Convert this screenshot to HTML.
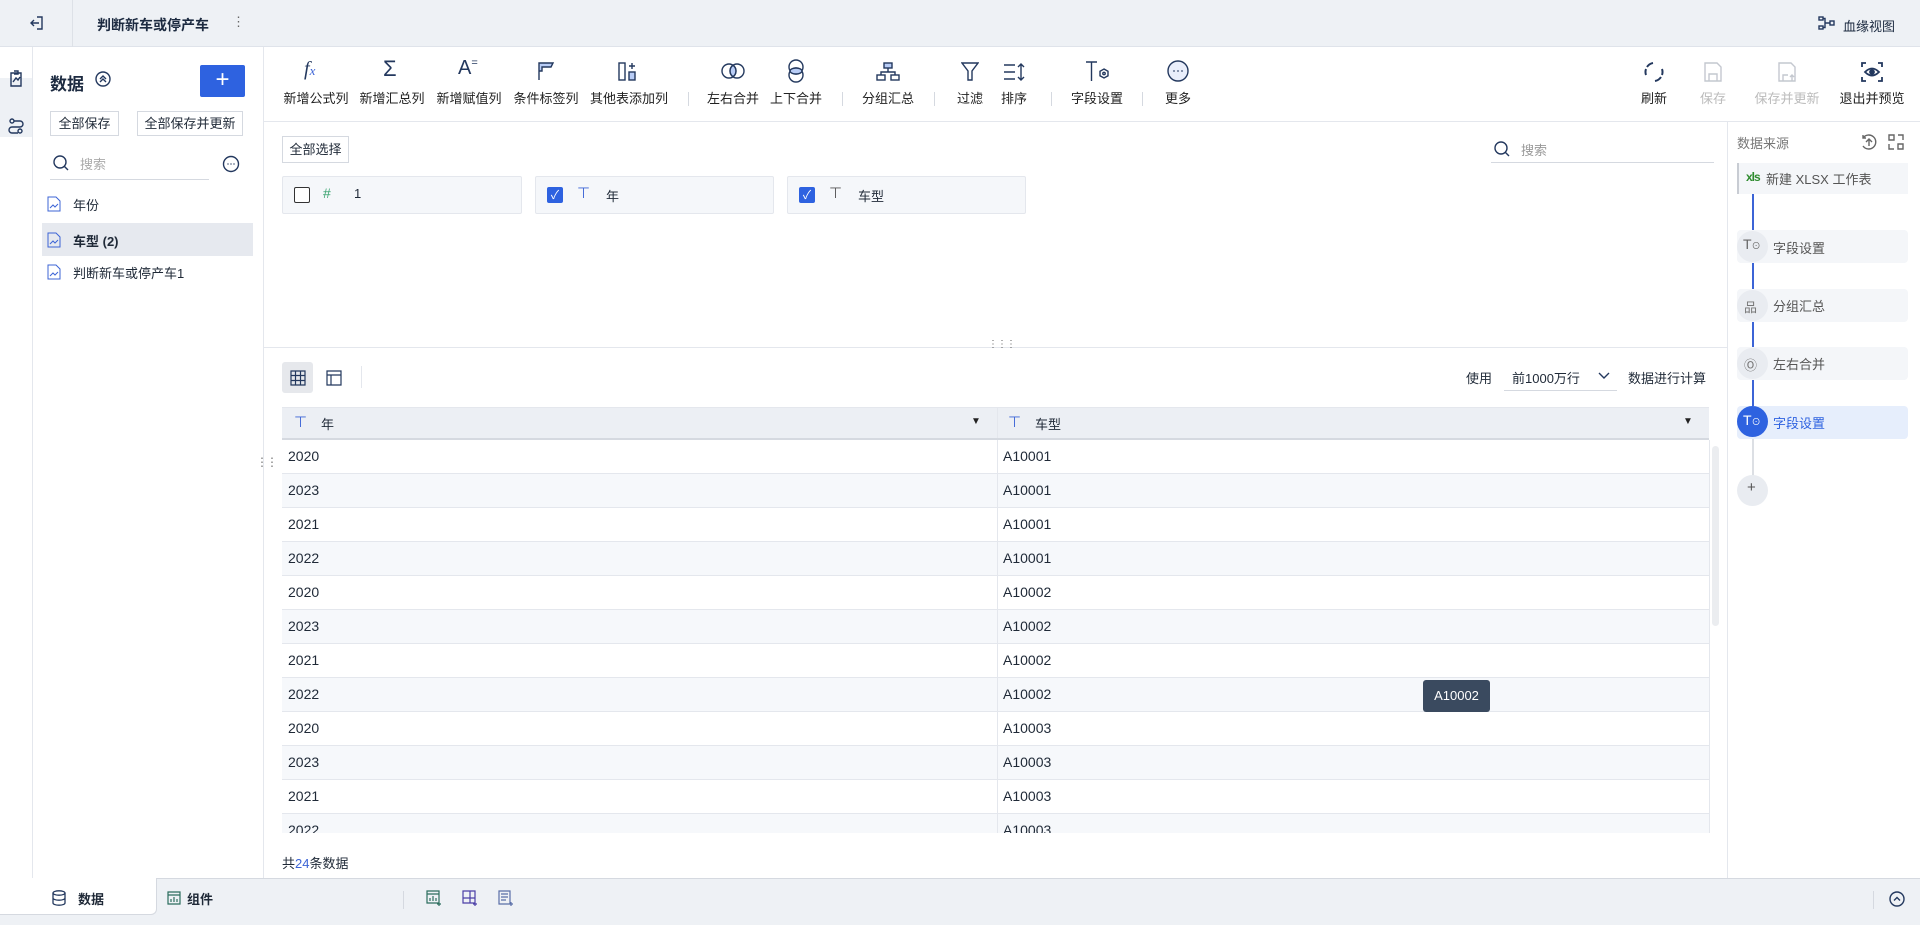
<!DOCTYPE html>
<html><head><meta charset="utf-8">
<style>
*{box-sizing:border-box;margin:0;padding:0}
body{width:1920px;height:925px;overflow:hidden;position:relative;background:#fff;font-family:"Liberation Sans","Noto Sans CJK SC",sans-serif;color:#1f2937;font-size:13px}
.a{position:absolute}
.ic{position:absolute;fill:none;stroke:#23385e;stroke-width:1.4}
.tb{position:absolute;top:88px;font-size:13px;color:#222;white-space:nowrap;transform:translateX(-50%)}
.sep{position:absolute;top:92px;width:1px;height:14px;background:#d5d9e0}
.row{position:absolute;left:282px;width:1427px;height:34px;border-bottom:1px solid #e4e7ed;font-size:14px}
.row span{position:absolute;top:8px}
.row .c1{left:6px}.row .c2{left:721px}
.row .d{position:absolute;left:715px;top:0;width:1px;height:34px;background:#e4e7ed}
.step{position:absolute;left:1737px;width:171px;height:33px;background:#f4f6f9;border-radius:4px}
.circ{position:absolute;left:1737px;width:31px;height:31px;border-radius:50%;background:#e9ecf1}
.st{position:absolute;left:1773px;font-size:13px;color:#555}
</style></head><body>
<div class="a" style="left:0;top:0;width:1920px;height:47px;background:#eef1f5;border-bottom:1px solid #dfe3ea"></div>
<div class="a" style="left:72px;top:0;width:1px;height:47px;background:#dde1e7"></div>
<svg class="ic" style="left:29px;top:15px" width="16" height="16" viewBox="0 0 16 16"><path d="M8 2h5v12H8M2 8h8M5 5L2 8l3 3"/></svg>
<div class="a" style="left:97px;top:15px;font-size:14px;font-weight:bold;color:#1c2a40">判断新车或停产车</div>
<div class="a" style="left:232px;top:14px;font-size:13px;color:#666">⋮</div>
<svg class="ic" style="left:1818px;top:16px" width="18" height="14" viewBox="0 0 18 14"><rect x="1" y="1" width="4" height="3"/><rect x="1" y="10" width="4" height="3"/><rect x="12" y="5" width="4" height="4"/><path d="M5 2.5h2v9H5M7 7h5"/></svg>
<div class="a" style="left:1843px;top:16px;font-size:13px;color:#1c2a40">血缘视图</div>

<div class="a" style="left:0;top:47px;width:33px;height:831px;background:#fff;border-right:1px solid #e4e7ed"></div>
<div class="a" style="left:0;top:78px;width:32px;height:59px;background:#eef1f5"></div>
<svg class="ic" style="left:8px;top:70px" width="16" height="18" viewBox="0 0 16 18"><path d="M3 3h10v13H3zM6 1h4v3H6M5 12l3-4 2 2 2-3"/></svg>
<svg class="ic" style="left:8px;top:117px" width="16" height="18" viewBox="0 0 16 18"><circle cx="4" cy="4" r="2"/><circle cx="12" cy="14" r="2"/><path d="M6 4h6a3 3 0 010 6H4a3 3 0 000 6h6"/></svg>

<div class="a" style="left:263px;top:47px;width:1px;height:831px;background:#e4e7ed"></div>
<div class="a" style="left:50px;top:70px;font-size:17px;font-weight:bold;color:#1c2a40">数据</div>
<svg class="ic" style="left:95px;top:71px" width="16" height="16" viewBox="0 0 16 16"><circle cx="8" cy="8" r="7"/><path d="M5 8l3-3 3 3M5 11l3-3 3 3"/></svg>
<div class="a" style="left:200px;top:65px;width:45px;height:32px;background:#2e62e0;border-radius:2px;color:#fff;font-size:24px;line-height:30px;text-align:center">+</div>
<div class="a" style="left:50px;top:111px;width:69px;height:25px;border:1px solid #d5d9e0;font-size:13px;line-height:23px;text-align:center">全部保存</div>
<div class="a" style="left:137px;top:111px;width:106px;height:25px;border:1px solid #d5d9e0;font-size:13px;line-height:23px;text-align:center">全部保存并更新</div>
<svg class="ic" style="left:52px;top:154px" width="18" height="18" viewBox="0 0 18 18"><circle cx="8" cy="8" r="6"/><path d="M12.5 12.5L16 16"/></svg>
<div class="a" style="left:80px;top:154px;font-size:13px;color:#aaa">搜索</div>
<div class="a" style="left:50px;top:179px;width:159px;height:1px;background:#d5d9e0"></div>
<svg class="ic" style="left:222px;top:155px" width="18" height="18" viewBox="0 0 18 18"><circle cx="9" cy="9" r="7.5"/><path d="M5.5 9h1M8.5 9h1M11.5 9h1"/></svg>
<div class="a" style="left:42px;top:223px;width:211px;height:33px;background:#e6e9ef"></div>
<svg class="ic" style="left:47px;top:196px;stroke:#3c64d6;stroke-width:1" width="14" height="16" viewBox="0 0 14 16"><path d="M1 1h8l4 4v10H1zM3 12l3-3 2 2 3-3"/></svg>
<div class="a" style="left:73px;top:195px;font-size:13px">年份</div>
<svg class="ic" style="left:47px;top:232px;stroke:#3c64d6;stroke-width:1" width="14" height="16" viewBox="0 0 14 16"><path d="M1 1h8l4 4v10H1zM3 12l3-3 2 2 3-3"/></svg>
<div class="a" style="left:73px;top:231px;font-size:13px;font-weight:bold">车型 (2)</div>
<svg class="ic" style="left:47px;top:264px;stroke:#3c64d6;stroke-width:1" width="14" height="16" viewBox="0 0 14 16"><path d="M1 1h8l4 4v10H1zM3 12l3-3 2 2 3-3"/></svg>
<div class="a" style="left:73px;top:263px;font-size:13px">判断新车或停产车1</div>

<div class="a" style="left:264px;top:121px;width:1656px;height:1px;background:#e4e7ed"></div>
<div class="a" style="left:304px;top:58px;font-size:20px;font-style:italic;font-family:'Liberation Serif',serif;color:#23385e">f<span style="font-size:13px;color:#3c64d6">x</span></div>
<div class="a" style="left:383px;top:56px;font-size:22px;color:#23385e">Σ</div>
<div class="a" style="left:458px;top:57px;font-size:20px;color:#23385e">A<span style="font-size:11px;vertical-align:top">=</span></div>
<svg class="ic" style="left:537px;top:61px" width="18" height="20" viewBox="0 0 18 20"><path d="M2 19V2h14l-2 4H5v4H2" fill="#b9cdf6"/></svg>
<svg class="ic" style="left:618px;top:61px" width="22" height="20" viewBox="0 0 22 20"><rect x="1" y="2" width="6" height="17"/><rect x="11" y="11" width="6" height="8" fill="#b9cdf6"/><path d="M14 2v6M11 5h6"/></svg>
<svg class="ic" style="left:721px;top:62px" width="24" height="18" viewBox="0 0 24 18"><circle cx="8" cy="9" r="7"/><circle cx="16" cy="9" r="7"/><path d="M12 3.3a7 7 0 010 11.4a7 7 0 010-11.4z" fill="#b9cdf6"/></svg>
<svg class="ic" style="left:787px;top:59px" width="18" height="24" viewBox="0 0 18 24"><circle cx="9" cy="8" r="7"/><circle cx="9" cy="16" r="7"/><ellipse cx="9" cy="12" rx="6" ry="3" fill="#b9cdf6"/></svg>
<svg class="ic" style="left:876px;top:62px" width="24" height="20" viewBox="0 0 24 20"><rect x="8" y="1" width="8" height="5" fill="#b9cdf6"/><rect x="1" y="13" width="8" height="5"/><rect x="15" y="13" width="8" height="5"/><path d="M12 6v4M5 13v-3h14v3"/></svg>
<svg class="ic" style="left:961px;top:62px" width="18" height="20" viewBox="0 0 18 20"><path d="M1 1h16l-6 8v9H7V9z"/></svg>
<svg class="ic" style="left:1003px;top:62px" width="24" height="20" viewBox="0 0 24 20"><path d="M1 3h11M1 10h11M1 17h11M18 2v16M15 5l3-3 3 3M15 15l3 3 3-3"/></svg>
<svg class="ic" style="left:1085px;top:60px" width="26" height="22" viewBox="0 0 26 22"><path d="M1 2h11M6.5 2v19"/><path d="M19 9l4 2.3v4.5L19 18l-4-2.2v-4.5z"/><circle cx="19" cy="13.5" r="1.2"/></svg>
<svg class="ic" style="left:1167px;top:60px" width="22" height="22" viewBox="0 0 22 22"><circle cx="11" cy="11" r="10" fill="#e9eefb"/><path d="M6.5 11h1M10.5 11h1M14.5 11h1" stroke-width="2"/></svg>
<div class="tb" style="left:316px">新增公式列</div><div class="tb" style="left:392px">新增汇总列</div><div class="tb" style="left:469px">新增赋值列</div><div class="tb" style="left:546px">条件标签列</div><div class="tb" style="left:629px">其他表添加列</div>
<div class="sep" style="left:688px"></div>
<div class="tb" style="left:733px">左右合并</div><div class="tb" style="left:796px">上下合并</div>
<div class="sep" style="left:842px"></div>
<div class="tb" style="left:888px">分组汇总</div>
<div class="sep" style="left:934px"></div>
<div class="tb" style="left:970px">过滤</div><div class="tb" style="left:1014px">排序</div>
<div class="sep" style="left:1051px"></div>
<div class="tb" style="left:1097px">字段设置</div>
<div class="sep" style="left:1142px"></div>
<div class="tb" style="left:1178px">更多</div>
<svg class="ic" style="left:1643px;top:61px;stroke-width:2" width="22" height="22" viewBox="0 0 22 22"><path d="M4 6A9 9 0 0110 2M18 16a9 9 0 01-6 4M3 14a9 9 0 010-6M19 8a9 9 0 010 6"/></svg>
<svg class="ic" style="left:1704px;top:62px;stroke:#c4c8cf" width="18" height="20" viewBox="0 0 18 20"><path d="M1 1h12l4 4v14H1zM5 19v-7h8v7"/></svg>
<svg class="ic" style="left:1778px;top:62px;stroke:#c4c8cf" width="20" height="20" viewBox="0 0 20 20"><path d="M1 1h12l4 4v14H1zM5 19v-6h5M14 19v-6M12 15l2-2 2 2"/></svg>
<svg class="ic" style="left:1861px;top:62px;stroke-width:1.8" width="22" height="20" viewBox="0 0 22 20"><path d="M1 5V1h4M17 1h4v4M21 15v4h-4M5 19H1v-4"/><path d="M4 10q7-7 14 0q-7 7-14 0z"/><circle cx="11" cy="10" r="2" fill="#23385e"/></svg>
<div class="tb" style="left:1654px">刷新</div><div class="tb" style="left:1713px;color:#bbb">保存</div><div class="tb" style="left:1787px;color:#bbb">保存并更新</div><div class="tb" style="left:1872px">退出并预览</div>

<div class="a" style="left:282px;top:136px;width:67px;height:27px;border:1px solid #d5d9e0;font-size:13px;line-height:25px;text-align:center">全部选择</div>
<svg class="ic" style="left:1493px;top:140px" width="18" height="18" viewBox="0 0 18 18"><circle cx="8" cy="8" r="6"/><path d="M12.5 12.5L16 16"/></svg>
<div class="a" style="left:1521px;top:140px;font-size:13px;color:#999">搜索</div>
<div class="a" style="left:1491px;top:162px;width:223px;height:1px;background:#d5d9e0"></div>
<div class="a" style="left:282px;top:176px;width:240px;height:38px;background:#f5f7fa;border:1px solid #e4e7ed;border-radius:2px"></div>
<div class="a" style="left:294px;top:187px;width:16px;height:16px;border:1.5px solid #333;border-radius:2px;background:#fff"></div>
<div class="a" style="left:323px;top:185px;font-size:14px;color:#3aa36f">#</div>
<div class="a" style="left:354px;top:186px;font-size:13px">1</div>
<div class="a" style="left:535px;top:176px;width:239px;height:38px;background:#f5f7fa;border:1px solid #e4e7ed;border-radius:2px"></div>
<div class="a" style="left:547px;top:187px;width:16px;height:16px;background:#2e62e0;border-radius:2px;color:#fff;font-size:12px;line-height:16px;text-align:center">✓</div>
<div class="a" style="left:577px;top:184px;font-size:15px;color:#3c64d6">⊤</div>
<div class="a" style="left:606px;top:186px;font-size:13px">年</div>
<div class="a" style="left:787px;top:176px;width:239px;height:38px;background:#f5f7fa;border:1px solid #e4e7ed;border-radius:2px"></div>
<div class="a" style="left:799px;top:187px;width:16px;height:16px;background:#2e62e0;border-radius:2px;color:#fff;font-size:12px;line-height:16px;text-align:center">✓</div>
<div class="a" style="left:829px;top:184px;font-size:15px;color:#555">⊤</div>
<div class="a" style="left:858px;top:186px;font-size:13px">车型</div>

<div class="a" style="left:264px;top:347px;width:1463px;height:1px;background:#e4e7ed"></div>
<div class="a" style="left:988px;top:339px;font-size:10px;color:#666;letter-spacing:-1px">⋮⋮⋮</div>
<div class="a" style="left:256px;top:455px;font-size:12px;color:#777;letter-spacing:-2px">⋮⋮</div>

<div class="a" style="left:282px;top:362px;width:31px;height:31px;background:#e6e8ec;border-radius:3px"></div>
<svg class="ic" style="left:290px;top:370px;stroke-width:1.2" width="16" height="16" viewBox="0 0 16 16"><path d="M1 1h14v14H1zM1 5.5h14M1 10.5h14M5.5 1v14M10.5 1v14"/></svg>
<svg class="ic" style="left:326px;top:370px;stroke-width:1.2" width="16" height="16" viewBox="0 0 16 16"><path d="M1 1h14v14H1zM1 5h14M5 5v10"/></svg>
<div class="a" style="left:361px;top:366px;width:1px;height:22px;background:#e4e7ed"></div>
<div class="a" style="left:1466px;top:368px;font-size:13px">使用</div>
<div class="a" style="left:1512px;top:368px;font-size:13px">前1000万行</div>
<svg class="ic" style="left:1597px;top:371px" width="14" height="10" viewBox="0 0 14 10"><path d="M2 2l5 5 5-5"/></svg>
<div class="a" style="left:1504px;top:390px;width:113px;height:1px;background:#d5d9e0"></div>
<div class="a" style="left:1628px;top:368px;font-size:13px">数据进行计算</div>

<div class="a" style="left:282px;top:407px;width:1427px;height:33px;background:#eceff4;border-bottom:2px solid #d5d9e0;border-top:1px solid #e4e7ed"></div>
<div class="a" style="left:997px;top:407px;width:1px;height:31px;background:#e4e7ed"></div>
<div class="a" style="left:294px;top:413px;font-size:15px;color:#3c64d6">⊤</div>
<div class="a" style="left:321px;top:414px;font-size:13px">年</div>
<div class="a" style="left:971px;top:416px;font-size:10px;color:#222">▼</div>
<div class="a" style="left:1008px;top:413px;font-size:15px;color:#3c64d6">⊤</div>
<div class="a" style="left:1035px;top:414px;font-size:13px">车型</div>
<div class="a" style="left:1683px;top:416px;font-size:10px;color:#222">▼</div>
<div class="a" style="left:282px;top:440px;width:1px;height:393px;background:#e4e7ed"></div>
<div class="a" style="left:1709px;top:440px;width:1px;height:393px;background:#e4e7ed"></div>
<div class="a" style="left:282px;top:440px;width:1428px;height:393px;overflow:hidden">
<div class="row" style="left:0;top:0;background:#fff"><span class="c1">2020</span><i class="d"></i><span class="c2">A10001</span></div>
<div class="row" style="left:0;top:34px;background:#f6f8fb"><span class="c1">2023</span><i class="d"></i><span class="c2">A10001</span></div>
<div class="row" style="left:0;top:68px;background:#fff"><span class="c1">2021</span><i class="d"></i><span class="c2">A10001</span></div>
<div class="row" style="left:0;top:102px;background:#f6f8fb"><span class="c1">2022</span><i class="d"></i><span class="c2">A10001</span></div>
<div class="row" style="left:0;top:136px;background:#fff"><span class="c1">2020</span><i class="d"></i><span class="c2">A10002</span></div>
<div class="row" style="left:0;top:170px;background:#f6f8fb"><span class="c1">2023</span><i class="d"></i><span class="c2">A10002</span></div>
<div class="row" style="left:0;top:204px;background:#fff"><span class="c1">2021</span><i class="d"></i><span class="c2">A10002</span></div>
<div class="row" style="left:0;top:238px;background:#f6f8fb"><span class="c1">2022</span><i class="d"></i><span class="c2">A10002</span></div>
<div class="row" style="left:0;top:272px;background:#fff"><span class="c1">2020</span><i class="d"></i><span class="c2">A10003</span></div>
<div class="row" style="left:0;top:306px;background:#f6f8fb"><span class="c1">2023</span><i class="d"></i><span class="c2">A10003</span></div>
<div class="row" style="left:0;top:340px;background:#fff"><span class="c1">2021</span><i class="d"></i><span class="c2">A10003</span></div>
<div class="row" style="left:0;top:374px;background:#f6f8fb"><span class="c1">2022</span><i class="d"></i><span class="c2">A10003</span></div>
</div>
<div class="a" style="left:1712px;top:446px;width:7px;height:180px;background:#ebedf0;border-radius:4px"></div>
<div class="a" style="left:1423px;top:680px;width:67px;height:32px;background:#3a4a5f;border-radius:3px;color:#fff;font-size:13px;line-height:32px;text-align:center">A10002</div>
<div class="a" style="left:282px;top:853px;font-size:13px">共<span style="color:#3c64d6">24</span>条数据</div>

<div class="a" style="left:1727px;top:122px;width:1px;height:756px;background:#e4e7ed"></div>
<div class="a" style="left:1737px;top:133px;font-size:13px;color:#777">数据来源</div>
<svg class="ic" style="left:1860px;top:133px;stroke:#666" width="18" height="18" viewBox="0 0 18 18"><path d="M3 5A7 7 0 113 13M3 2v3h3M9 13V6M6 9l3-3 3 3"/></svg>
<svg class="ic" style="left:1888px;top:134px;stroke:#666" width="16" height="16" viewBox="0 0 16 16"><path d="M1 1h5v5H1zM10 1h5v5M1 10v5h5M10 10h5v5h-5z"/></svg>
<div class="a" style="left:1737px;top:163px;width:171px;height:31px;background:#f4f6f9;border-left:2px solid #c8ccd3"></div>
<div class="a" style="left:1746px;top:170px;font-size:12px;color:#2e8b2e;font-weight:bold;letter-spacing:-1px">xls</div>
<div class="a" style="left:1766px;top:169px;font-size:13px;color:#555">新建 XLSX 工作表</div>
<div class="a" style="left:1752px;top:194px;width:2px;height:220px;background:#3c64d6"></div>
<div class="a" style="left:1752px;top:436px;width:2px;height:44px;background:#dcdfe4"></div>
<div class="step" style="top:230px"></div><div class="circ" style="top:231px"></div>
<div class="a" style="left:1743px;top:236px;font-size:14px;color:#666">T<span style="font-size:9px">⊙</span></div>
<div class="st" style="top:238px">字段设置</div>
<div class="step" style="top:289px"></div><div class="circ" style="top:290px"></div>
<div class="a" style="left:1744px;top:297px;font-size:13px;color:#777">品</div>
<div class="st" style="top:296px">分组汇总</div>
<div class="step" style="top:347px"></div><div class="circ" style="top:348px"></div>
<div class="a" style="left:1744px;top:355px;font-size:13px;color:#777">Ⓞ</div>
<div class="st" style="top:354px">左右合并</div>
<div class="step" style="top:406px;background:#e6eefc"></div>
<div class="circ" style="top:406px;background:#2e62e0"></div>
<div class="a" style="left:1743px;top:412px;font-size:14px;color:#fff">T<span style="font-size:9px">⊙</span></div>
<div class="st" style="top:413px;color:#2e62e0">字段设置</div>
<div class="circ" style="top:475px"></div>
<div class="a" style="left:1747px;top:479px;font-size:15px;color:#555">+</div>

<div class="a" style="left:0;top:878px;width:1920px;height:47px;background:#eef1f5;border-top:1px solid #d5d9e0"></div>
<div class="a" style="left:0;top:878px;width:157px;height:37px;background:#fff;border-right:1px solid #d5d9e0;border-bottom:1px solid #d5d9e0;border-radius:0 0 6px 0"></div>
<svg class="ic" style="left:52px;top:890px;stroke-width:1.3" width="14" height="16" viewBox="0 0 14 16"><ellipse cx="7" cy="3" rx="6" ry="2.2"/><path d="M1 3v10c0 1.2 2.7 2.2 6 2.2s6-1 6-2.2V3M1 8c0 1.2 2.7 2.2 6 2.2S13 9.2 13 8"/></svg>
<div class="a" style="left:78px;top:889px;font-size:13px;font-weight:bold">数据</div>
<svg class="ic" style="left:167px;top:891px;stroke:#2c6e5e;stroke-width:1.2" width="14" height="14" viewBox="0 0 14 14"><path d="M1 1h12v12H1zM1 4h12M4 11V8M7 11V6M10 11V8"/></svg>
<div class="a" style="left:187px;top:889px;font-size:13px;font-weight:bold">组件</div>
<div class="a" style="left:403px;top:891px;width:1px;height:18px;background:#d5d9e0"></div>
<svg class="ic" style="left:426px;top:890px;stroke:#2c6e5e;stroke-width:1.2" width="16" height="16" viewBox="0 0 16 16"><path d="M1 1h12v12H1zM1 4h12M4 11V8M7 11V6M10 11V8M13 12v4M11 14h4"/></svg>
<svg class="ic" style="left:462px;top:890px;stroke:#4b3fa6;stroke-width:1.2" width="16" height="16" viewBox="0 0 16 16"><path d="M1 1h12v12H1zM1 8h12M8 1v12M13 12v4M11 14h4"/></svg>
<svg class="ic" style="left:498px;top:890px;stroke:#5a6fa8;stroke-width:1.2" width="16" height="16" viewBox="0 0 16 16"><path d="M1 1h11v13H1zM3 4h7M3 7h7M3 10h5M13 12v4M11 14h4"/></svg>
<div class="a" style="left:1873px;top:891px;width:1px;height:18px;background:#d5d9e0"></div>
<svg class="ic" style="left:1889px;top:891px" width="16" height="16" viewBox="0 0 16 16"><circle cx="8" cy="8" r="7"/><path d="M5 9.5l3-3 3 3"/></svg>
</body></html>
